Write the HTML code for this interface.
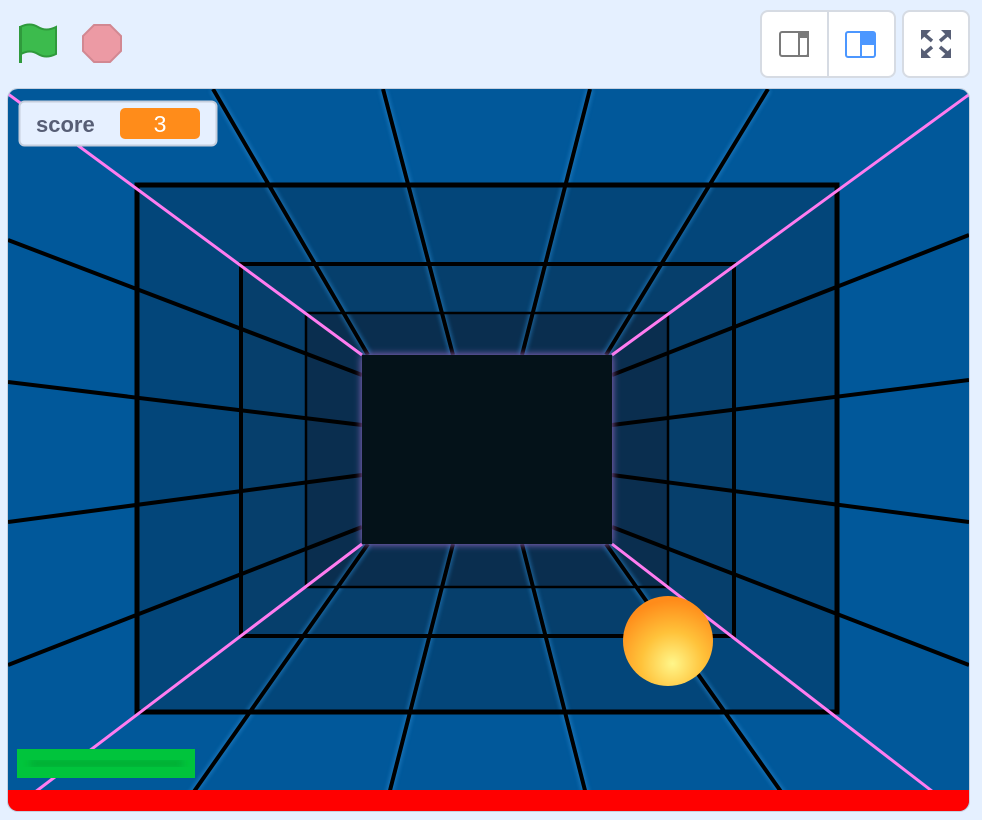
<!DOCTYPE html>
<html><head><meta charset="utf-8"><style>
body{margin:0;background:#e5f0ff;width:982px;height:820px;overflow:hidden;font-family:"Liberation Sans",sans-serif}
</style></head><body>
<svg width="982" height="820" viewBox="0 0 982 820" style="position:absolute;left:0;top:0">
<defs>
<clipPath id="st"><rect x="8" y="89" width="961" height="722" rx="10"/></clipPath>
<radialGradient id="ball" cx="0.55" cy="0.75" r="0.7"><stop offset="0" stop-color="#fff68a"/><stop offset="0.5" stop-color="#ffc23a"/><stop offset="1" stop-color="#ff8c1a"/></radialGradient>
<filter id="glow" x="-20%" y="-20%" width="140%" height="140%"><feGaussianBlur stdDeviation="4"/></filter>
<filter id="g2" x="-20%" y="-20%" width="140%" height="140%"><feGaussianBlur stdDeviation="2"/></filter>
</defs>
<path d="M20 27 Q30 22 38 27 Q46 32 56 27 L56 54 Q46 59 38 54 Q30 49 21 54 Z" fill="#3cbb4d" stroke="#2f9a3c" stroke-width="2"/>
<line x1="20.5" y1="26" x2="20.5" y2="63" stroke="#2f9a3c" stroke-width="3"/>
<polygon points="94,25 110,25 121,36 121,51 110,62 94,62 83,51 83,36" fill="#ec9aa4" stroke="#d28892" stroke-width="2"/>
<rect x="761" y="11" width="134" height="66" rx="7" fill="#fff" stroke="#d6dbe3" stroke-width="2"/>
<line x1="828" y1="12" x2="828" y2="76" stroke="#d6dbe3" stroke-width="2"/>
<rect x="903" y="11" width="66" height="66" rx="7" fill="#fff" stroke="#d6dbe3" stroke-width="2"/>
<rect x="780" y="32" width="28" height="24" rx="2" fill="none" stroke="#7a7a7a" stroke-width="2"/>
<rect x="799" y="32" width="9" height="24" fill="none" stroke="#7a7a7a" stroke-width="2"/><rect x="799" y="32" width="9" height="6" fill="#7a7a7a"/>
<rect x="846" y="32" width="29" height="25" rx="2" fill="none" stroke="#4c97ff" stroke-width="2"/>
<line x1="861" y1="32" x2="861" y2="57" stroke="#4c97ff" stroke-width="2"/><rect x="861" y="32" width="14" height="12" fill="#4c97ff"/><line x1="861" y1="44" x2="875" y2="44" stroke="#4c97ff" stroke-width="2"/>
<g stroke="#575e75" stroke-width="3.5">
<line x1="925" y1="35" x2="932" y2="41"/><line x1="947" y1="35" x2="940" y2="41"/><line x1="925" y1="53" x2="932" y2="47"/><line x1="947" y1="53" x2="940" y2="47"/></g>
<g fill="#575e75"><polygon points="921,30 931,30 921,40"/><polygon points="951,30 941,30 951,40"/><polygon points="921,58 931,58 921,48"/><polygon points="951,58 941,58 951,48"/></g>
<rect x="7.5" y="88.5" width="962" height="723" rx="10" fill="none" stroke="#c5d0e0"/>
<g clip-path="url(#st)">
<rect x="8" y="89" width="961" height="722" fill="#01589a"/>
<rect x="137" y="185" width="700" height="527" fill="#03467a"/>
<rect x="241" y="264" width="493" height="372" fill="#063f6c"/>
<rect x="306" y="313" width="362" height="274" fill="#0a2e4f"/>
<g stroke="#2a8ad0" stroke-width="7" filter="url(#g2)" opacity="0.6">
<line x1="213" y1="89" x2="368" y2="355"/><line x1="383" y1="89" x2="453" y2="355"/><line x1="590" y1="89" x2="522" y2="355"/><line x1="768" y1="89" x2="606" y2="355"/>
<line x1="181" y1="810" x2="368" y2="544"/><line x1="385" y1="810" x2="453" y2="544"/><line x1="590" y1="810" x2="522" y2="544"/><line x1="794" y1="810" x2="606" y2="544"/>
</g>
<g stroke="#000" stroke-width="4">
<line x1="213" y1="89" x2="368" y2="355"/><line x1="383" y1="89" x2="453" y2="355"/><line x1="590" y1="89" x2="522" y2="355"/><line x1="768" y1="89" x2="606" y2="355"/>
<line x1="181" y1="810" x2="368" y2="544"/><line x1="385" y1="810" x2="453" y2="544"/><line x1="590" y1="810" x2="522" y2="544"/><line x1="794" y1="810" x2="606" y2="544"/>
<line x1="8" y1="240" x2="362" y2="375"/><line x1="8" y1="382" x2="362" y2="425"/><line x1="8" y1="522" x2="362" y2="475"/><line x1="8" y1="665" x2="362" y2="527"/>
<line x1="969" y1="235" x2="612" y2="375"/><line x1="969" y1="380" x2="612" y2="425"/><line x1="969" y1="522" x2="612" y2="475"/><line x1="969" y1="665" x2="612" y2="527"/>
</g>
<g fill="none" stroke="#000">
<rect x="137" y="185" width="700" height="527" stroke-width="5"/>
<rect x="241" y="264" width="493" height="372" stroke-width="4"/>
<rect x="306" y="313" width="362" height="274" stroke-width="2.5"/>
</g>
<g stroke="#ff7cf0" stroke-width="3">
<line x1="0" y1="88" x2="362" y2="355"/><line x1="978" y1="88" x2="612" y2="355"/>
<line x1="18" y1="805" x2="362" y2="544"/><line x1="950" y1="805" x2="612" y2="544"/>
</g>
<rect x="362" y="355" width="250" height="189" fill="#a070d0" filter="url(#glow)"/>
<rect x="362" y="355" width="250" height="189" fill="#041219"/>
<circle cx="668" cy="641" r="45" fill="url(#ball)"/>
<rect x="17" y="749" width="178" height="29" fill="#00c43c"/>
<rect x="30" y="761" width="153" height="5" fill="#009a2e" filter="url(#glow)" opacity="0.9"/>
<rect x="8" y="790" width="961" height="21" fill="#ff0000"/>
</g>
<rect x="19.5" y="101.5" width="197" height="44" rx="5" fill="#e6f0ff" stroke="#c5cedd" stroke-width="2"/>
<text x="36" y="132" font-size="22" font-weight="bold" fill="#575e75" font-family="Liberation Sans,sans-serif">score</text>
<rect x="120" y="108" width="80" height="31" rx="5" fill="#ff8c1a"/>
<text x="160" y="132" font-size="23" fill="#fff" text-anchor="middle" font-family="Liberation Sans,sans-serif">3</text>
</svg>
</body></html>
